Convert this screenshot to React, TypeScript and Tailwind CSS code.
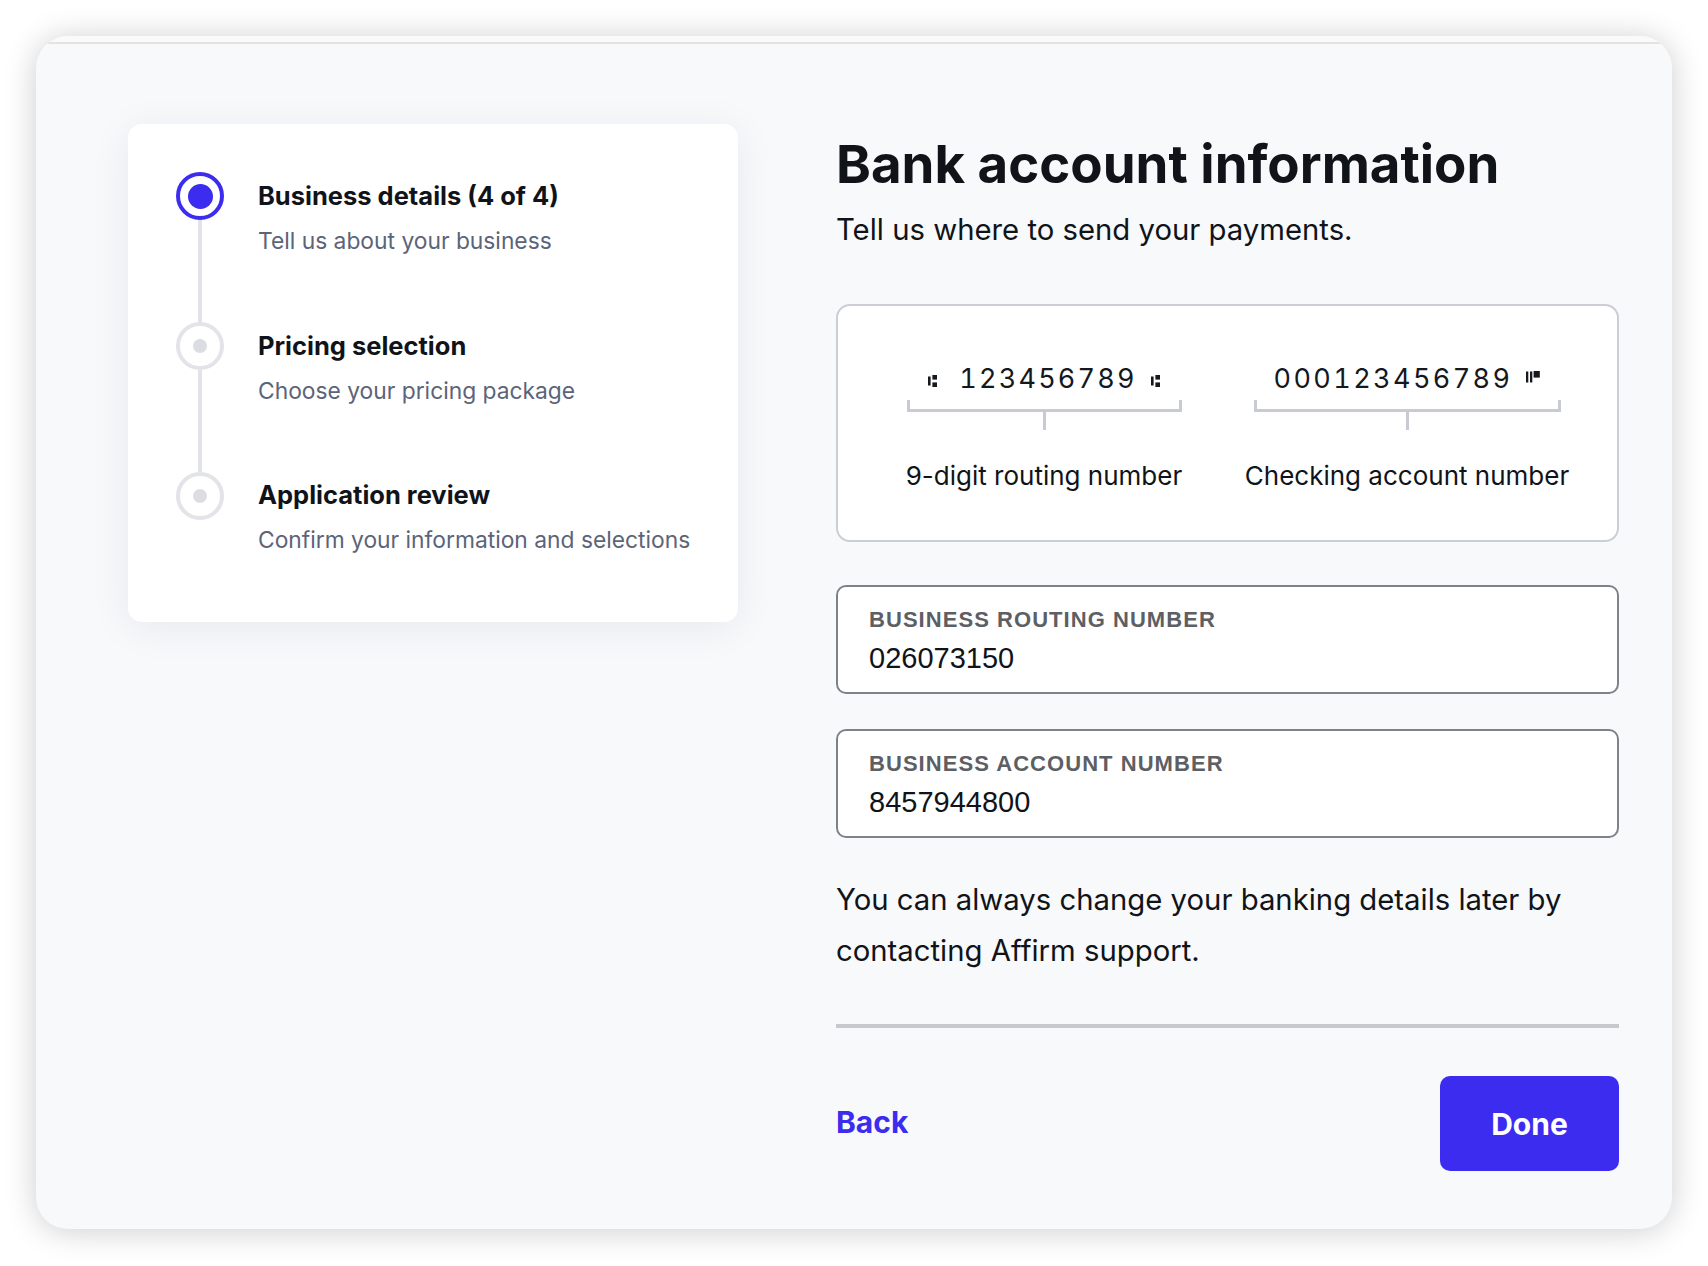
import React from "react";

function Transit() {
  return (
    <svg width="9" height="12" viewBox="0 0 9 12" className="mt-[4px] shrink-0">
      <rect x="0" y="1.5" width="2.6" height="9" fill="#15181d" />
      <rect x="4.4" y="0" width="4.6" height="4.6" fill="#15181d" />
      <rect x="4.4" y="7.4" width="4.6" height="4.6" fill="#15181d" />
    </svg>
  );
}

function OnUs() {
  return (
    <svg width="14" height="12" viewBox="0 0 14 12" className="mb-[4px] shrink-0">
      <rect x="0" y="0.5" width="2.3" height="11" fill="#15181d" />
      <rect x="4" y="0.5" width="2.3" height="11" fill="#15181d" />
      <rect x="7.6" y="0" width="6.2" height="6.6" fill="#15181d" />
    </svg>
  );
}

const steps = [
  { title: "Business details (4 of 4)", sub: "Tell us about your business" },
  { title: "Pricing selection", sub: "Choose your pricing package" },
  { title: "Application review", sub: "Confirm your information and selections" },
];

function Stepper() {
  return (
    <div className="w-[610px] self-start rounded-[14px] bg-white px-[48px] pt-[48px] pb-[66px] shadow-[0_6px_40px_rgba(20,20,50,0.07)]">
      {steps.map((s, i) => (
        <div key={s.title} className="flex">
          <div className="flex w-[48px] shrink-0 flex-col items-center">
            {i === 0 ? (
              <div className="flex h-[48px] w-[48px] items-center justify-center rounded-full border-[4.5px] border-[#3c2cf0] bg-white">
                <div className="h-[25px] w-[25px] rounded-full bg-[#3c2cf0]" />
              </div>
            ) : (
              <div className="flex h-[48px] w-[48px] items-center justify-center rounded-full border-[4px] border-[#e3e4e9] bg-white">
                <div className="h-[14px] w-[14px] rounded-full bg-[#dcdde3]" />
              </div>
            )}
            {i < steps.length - 1 && <div className="w-[4px] flex-1 bg-[#e2e3e8]" />}
          </div>
          <div className={i < steps.length - 1 ? "ml-[34px] pt-[8px] pb-[65px]" : "ml-[34px] pt-[7px]"}>
            <div className="whitespace-nowrap text-[25.5px] font-bold leading-[32px] text-[#101419]">
              {s.title}
            </div>
            <div className="mt-[13px] whitespace-nowrap text-[22.8px] leading-[32px] text-[#5b6479]">
              {s.sub}
            </div>
          </div>
        </div>
      ))}
    </div>
  );
}

function Field({ label, value }: { label: string; value: string }) {
  return (
    <div className="h-[109px] rounded-[10px] border-2 border-[#7f8288] bg-white pl-[31px] pt-[20px] font-['Liberation_Sans',Arial,sans-serif]">
      <div className="whitespace-nowrap text-[22px] font-bold leading-[26px] tracking-[1.05px] text-[#5d5f64]">
        {label}
      </div>
      <div className="mt-[8px] text-[29px] leading-[34px] text-[#101419]">{value}</div>
    </div>
  );
}

export default function App() {
  return (
    <div className="min-h-screen bg-white px-[36px] pt-[36px] pb-[37px] font-['Inter',sans-serif]">
      <div className="h-[1193px] w-[1636px] overflow-hidden rounded-[32px] bg-[#f8f9fb] shadow-[0_2px_32px_rgba(0,0,0,0.2)]">
        <div className="h-[8px] border-b-2 border-[#e4e3e1] bg-[#fafafa]" />
        <div className="flex pl-[92px] pt-[80px]">
          <Stepper />
          <div className="ml-[98px] w-[783px] pt-[8px]">
            <h1 className="whitespace-nowrap text-[52.8px] font-bold leading-[64px] text-[#101419]">
              Bank account information
            </h1>
            <p className="mt-[16px] text-[29.3px] leading-[36px] text-[#101419]">
              Tell us where to send your payments.
            </p>

            <div className="mt-[56px] flex h-[238px] rounded-[14px] border-2 border-[#cbced5] bg-white pl-[66px] pt-[58px]">
              <div className="flex w-[280px] flex-col items-center">
                <div className="flex h-[30px] items-center text-[#15181d]">
                  <Transit />
                  <span className="ml-[22px] text-[27px] leading-[30px] tabular-nums tracking-[2.2px]">
                    123456789
                  </span>
                  <span className="ml-[14px]">
                    <Transit />
                  </span>
                </div>
                <div className="mt-[6px] h-[12px] w-[275px] border-x-[3px] border-b-[3px] border-[#c8cbd3]" />
                <div className="h-[18px] w-[3px] bg-[#c8cbd3]" />
                <div className="mt-[30px] whitespace-nowrap text-[26px] leading-[32px] text-[#101419]">
                  9-digit routing number
                </div>
              </div>
              <div className="ml-[60px] flex w-[326px] flex-col items-center">
                <div className="flex h-[30px] items-center text-[#15181d]">
                  <span className="text-[27px] leading-[30px] tabular-nums tracking-[2.4px]">000123456789</span>
                  <span className="ml-[14px] flex">
                    <OnUs />
                  </span>
                </div>
                <div className="mt-[6px] h-[12px] w-[307px] border-x-[3px] border-b-[3px] border-[#c8cbd3]" />
                <div className="h-[18px] w-[3px] bg-[#c8cbd3]" />
                <div className="mt-[30px] whitespace-nowrap text-[26px] leading-[32px] text-[#101419]">
                  Checking account number
                </div>
              </div>
            </div>

            <div className="mt-[43px]">
              <Field label="BUSINESS ROUTING NUMBER" value="026073150" />
            </div>
            <div className="mt-[35px]">
              <Field label="BUSINESS ACCOUNT NUMBER" value="8457944800" />
            </div>

            <p className="mt-[36px] text-[29.3px] leading-[51px] text-[#101419]">
              You can always change your banking details later by contacting Affirm support.
            </p>

            <div className="mt-[48px] h-[4px] bg-[#c8c9cc]" />

            <div className="mt-[48px] flex items-center justify-between">
              <button className="mb-[4px] text-[30px] font-bold leading-[36px] text-[#3c2cf0]">Back</button>
              <button className="flex h-[95px] w-[179px] items-center justify-center rounded-[10px] bg-[#3c2cf0] pt-[2px] text-[30px] font-bold text-white">
                Done
              </button>
            </div>
          </div>
        </div>
      </div>
    </div>
  );
}
